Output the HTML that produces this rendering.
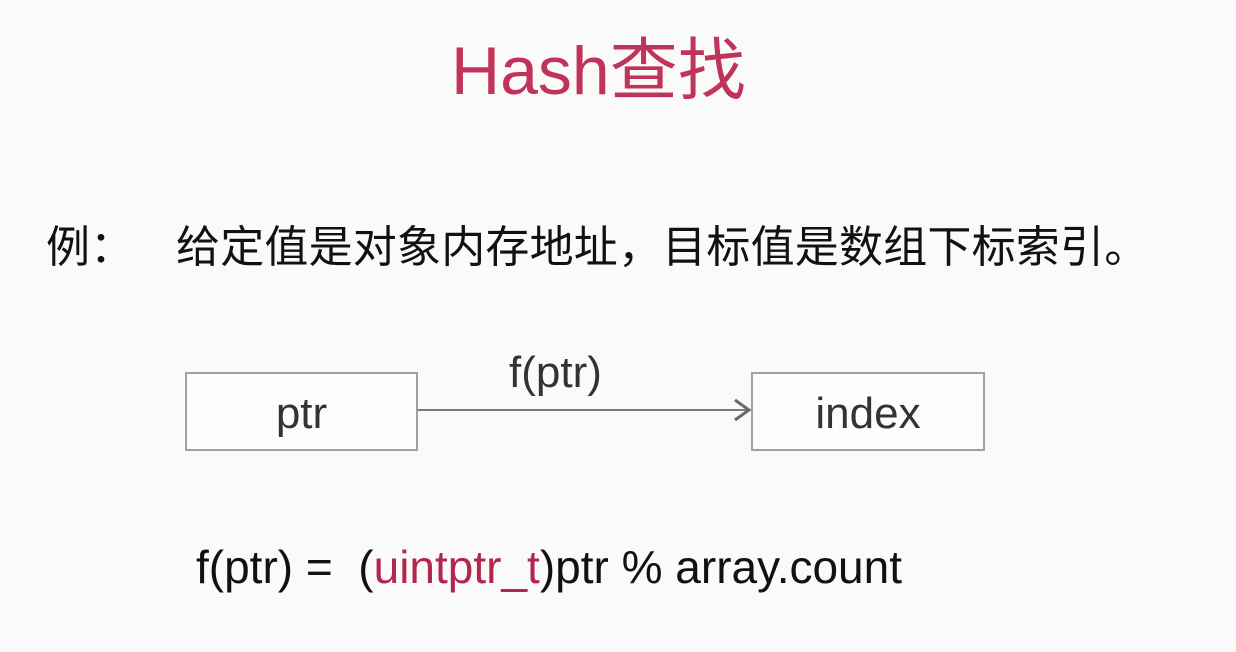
<!DOCTYPE html>
<html><head><meta charset="utf-8"><style>
html,body{margin:0;padding:0}
body{width:1236px;height:652px;background:#fbfafa;position:relative;overflow:hidden;font-family:"Liberation Sans","Noto Sans CJK SC",sans-serif}
.a{position:absolute;white-space:nowrap}
.box{position:absolute;border:2px solid #a0a0a0;box-sizing:border-box;background:#fdfdfd;display:flex;align-items:center;justify-content:center;font-size:44px;color:#333}
</style></head><body>
<div class="a" style="left:451px;top:31px;font-size:68px;color:#c0345c;line-height:80px">Hash查找</div>
<div class="a" style="left:46px;top:222px;font-size:44px;color:#111;line-height:52px">例：</div>
<div class="a" style="left:176px;top:222px;font-size:44px;color:#111;line-height:52px;letter-spacing:0.2px">给定值是对象内存地址，目标值是数组下标索引。</div>
<div class="box" style="left:185px;top:372px;width:233px;height:79px;padding-top:4px">ptr</div>
<div class="box" style="left:751px;top:372px;width:234px;height:79px;padding-top:4px">index</div>
<svg class="a" style="left:0;top:0" width="1236" height="652"><line x1="418" y1="410" x2="748" y2="410" stroke="#7a7a7a" stroke-width="2"/><polyline points="735,400 749,410 735,420" fill="none" stroke="#6a6a6a" stroke-width="3"/></svg>
<div class="a" style="left:509px;top:348px;font-size:44px;color:#333;line-height:50px">f(ptr)</div>
<div class="a" style="left:196px;top:540px;font-size:46px;color:#111;line-height:54px">f(ptr) =&nbsp; (<span style="color:#b3264f">uintptr_t</span>)ptr % array.count</div>
</body></html>
